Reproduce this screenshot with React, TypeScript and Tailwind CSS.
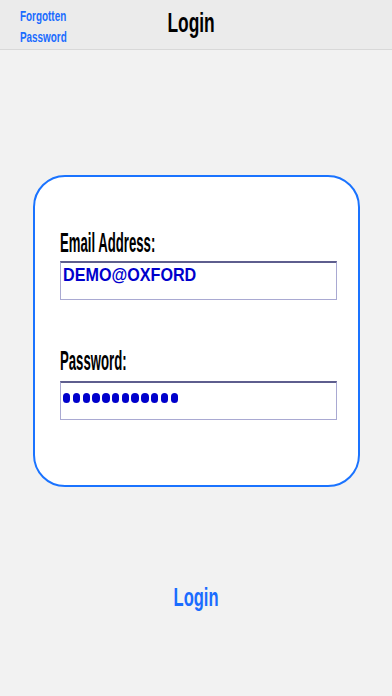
export default function App() {
  const arial = { fontFamily: '"Liberation Sans", Arial, sans-serif' };
  return (
    <div className="w-[392px] h-[696px] bg-[#f2f2f2] flex flex-col" style={arial}>
      <div className="h-[50px] shrink-0 bg-[#ebebeb] border-b border-[#d8d8d8] relative">
        <div className="absolute left-[20px] top-[5px] text-[15px] leading-[21px] font-bold text-[#1a6cff]">
          <div className="origin-left scale-x-[0.66]">Forgotten</div>
          <div className="origin-left scale-x-[0.66]">Password</div>
        </div>
        <div className="pt-[9px] pr-[9px] text-center">
          <span className="inline-block text-[28px] leading-[28px] font-bold text-black scale-x-[0.62]">Login</span>
        </div>
      </div>
      <div className="ml-[33px] mt-[125px] w-[327px] h-[312px] shrink-0 bg-white border-2 border-[#1a73ff] rounded-[32px] pl-[25px] pr-[21px] pt-[51px]">
        <div className="text-[28px] leading-[30px] font-bold text-black origin-left scale-x-[0.47] whitespace-nowrap">Email Address:</div>
        <div className="mt-[3px] h-[39px] bg-white border border-[#a9a9d2] border-t-2 border-t-[#5e5e8e] pl-[2px] pt-[1px]">
          <div className="text-[19px] leading-[22px] font-bold text-[#0000cc] origin-left scale-x-[0.85] whitespace-nowrap">DEMO@OXFORD</div>
        </div>
        <div className="mt-[46px] text-[28px] leading-[30px] font-bold text-black origin-left scale-x-[0.47] whitespace-nowrap">Password:</div>
        <div className="mt-[5px] h-[39px] bg-white border border-[#a9a9d2] border-t-2 border-t-[#5e5e8e] flex items-start pl-[2px] pt-[10px] gap-[2.4px]">
          {Array.from({ length: 12 }).map((_, i) => (
            <span key={i} className="w-[7.4px] h-[9.5px] rounded-full bg-[#0000cc]" />
          ))}
        </div>
      </div>
      <div className="mt-[95px] text-center">
        <span className="inline-block text-[25px] leading-[30px] font-bold text-[#1a6cff] scale-x-[0.66]">Login</span>
      </div>
    </div>
  );
}
